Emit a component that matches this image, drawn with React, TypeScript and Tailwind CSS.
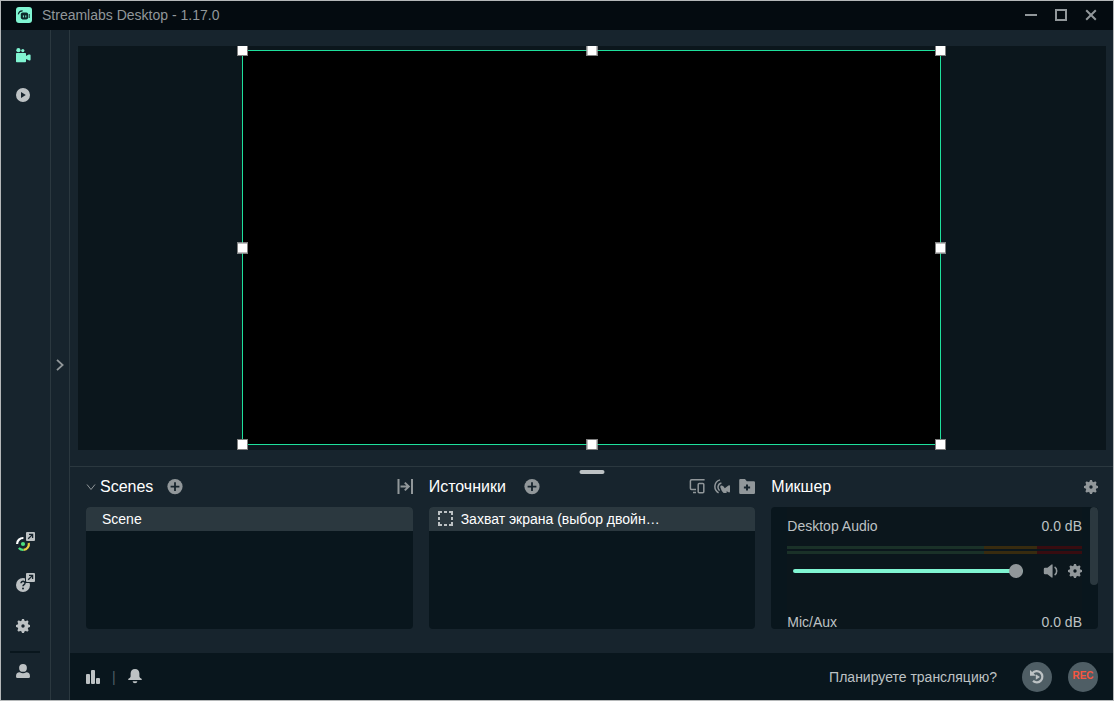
import React, { useState } from 'react';

function LogoIcon() {
  return (
    <svg width="16" height="16" viewBox="0 0 16 16" aria-hidden="true">
      <rect width="16" height="16" rx="3" fill="#80f5d2" />
      <path d="M2.4 7C2.8 5 4 4 6.2 3.8" stroke="#0d2a2b" strokeWidth="1.2" fill="none" strokeLinecap="round" />
      <rect x="4.8" y="5.6" width="7.4" height="6.8" rx="1.8" fill="#0d2a2b" />
      <path d="M7.4 8.4v2M9.8 8.4v2" stroke="#80f5d2" strokeWidth="1" />
      <path d="M13.3 7v4" stroke="#0d2a2b" strokeWidth=".9" />
    </svg>
  );
}

function CameraIcon() {
  return (
    <svg width="15" height="15" viewBox="0 0 15 15" fill="currentColor" aria-hidden="true">
      <circle cx="2.4" cy="2.2" r="2.1" />
      <circle cx="6.8" cy="2.6" r="1.6" />
      <path d="M0 5.6Q0 4.9.8 4.9H9.2Q10 4.9 10 5.6V8L12.6 6.6Q14.6 6 14.6 7.3V11.6Q14.6 12.9 12.6 12.3L10 11V13.4Q10 14.2 9.2 14.2H.8Q0 14.2 0 13.4Z" />
    </svg>
  );
}

function PlayIcon() {
  return (
    <svg width="14" height="14" viewBox="0 0 14 14" aria-hidden="true">
      <path fillRule="evenodd" d="M7 0a7 7 0 1 1 0 14A7 7 0 0 1 7 0ZM5 4v6l4.8-3Z" fill="currentColor" />
    </svg>
  );
}

function GearIcon() {
  return (
    <svg width="14" height="14" viewBox="0 0 14 14" fill="currentColor" aria-hidden="true">
      <circle cx="7" cy="7" r="3.6" fill="none" stroke="currentColor" strokeWidth="3.8" />
      {[0, 45, 90, 135, 180, 225, 270, 315].map((angle) => (
        <path key={angle} d="M5.3 2.6L6 0H8L8.7 2.6Z" transform={`rotate(${angle} 7 7)`} />
      ))}
    </svg>
  );
}

function ExternalBadge() {
  return (
    <>
      <rect x="9" y="-1" width="11" height="11" fill="#17242d" />
      <rect x="10" y="0" width="9" height="9" rx="1" fill="#bdc2c4" />
      <path d="M12.2 6.8L16.4 2.6M13 2.4H16.6V6" stroke="#17242d" strokeWidth="1.3" fill="none" />
    </>
  );
}

function DashboardIcon() {
  return (
    <svg width="19" height="19" viewBox="0 0 19 19" fill="none" aria-hidden="true">
      <path d="M1.1 12A6 6 0 0 1 7.4 6" stroke="#ffffff" strokeWidth="2.2" />
      <path d="M2.8 16A5.8 5.8 0 0 0 7.6 17.8" stroke="#4be07f" strokeWidth="2.2" />
      <path d="M7.6 17.8A5.8 5.8 0 0 0 12.8 11" stroke="#e8cf45" strokeWidth="2.2" />
      <circle cx="7" cy="12" r="2.1" fill="#4be07f" />
      <ExternalBadge />
    </svg>
  );
}

function HelpIcon() {
  return (
    <svg width="19" height="19" viewBox="0 0 19 19" fill="none" aria-hidden="true">
      <circle cx="7" cy="12" r="7" fill="#bdc2c4" />
      <path d="M5 10.3C5 7.6 9.2 7.8 9 10.2C8.9 11.6 7 11.6 7 13.3" stroke="#17242d" strokeWidth="1.5" />
      <circle cx="7" cy="15.4" r="1" fill="#17242d" />
      <ExternalBadge />
    </svg>
  );
}

function UserIcon() {
  return (
    <svg width="14" height="14" viewBox="0 0 14 14" fill="currentColor" aria-hidden="true">
      <circle cx="7" cy="3.9" r="3.9" />
      <path d="M0 12.4C0 9.6 1.2 8.2 3.7 8.2C5.6 9.6 8.4 9.6 10.3 8.2C12.8 8.2 14 9.6 14 12.4Q14 14 12.6 14H1.4Q0 14 0 12.4Z" />
    </svg>
  );
}

function AddIcon() {
  return (
    <svg width="16" height="16" viewBox="0 0 16 16" aria-hidden="true">
      <circle cx="8" cy="7.6" r="7.6" fill="currentColor" />
      <path d="M8 3.2v8.8M3.6 7.6h8.8" stroke="#17242d" strokeWidth="1.8" />
    </svg>
  );
}

function TransitionIcon() {
  return (
    <svg width="16" height="16" viewBox="0 0 16 16" fill="none" stroke="currentColor" strokeWidth="2" aria-hidden="true">
      <path d="M1.5 0v15M15 0v15M3.5 7.5h8.5M7.8 3.6L11.8 7.5L7.8 11.4" />
    </svg>
  );
}

function DevicesIcon() {
  return (
    <svg width="16" height="16" viewBox="0 0 16 16" fill="none" stroke="currentColor" strokeWidth="1.5" aria-hidden="true">
      <path d="M7 10.4H2.6Q1.4 10.4 1.4 9.2V2Q1.4.8 2.6.8H15.6M4 13.6H7" />
      <rect x="9.2" y="4.4" width="5.6" height="9.4" rx="1" />
    </svg>
  );
}

function GuestCamIcon() {
  return (
    <svg width="16" height="16" viewBox="0 0 16 16" fill="none" aria-hidden="true">
      <path d="M6 .9C-.4 3-.7 10.8 4.6 13.8M7.4 4C3.6 4.8 3 9.4 5.6 11.6" stroke="currentColor" strokeWidth="1.5" />
      <path d="M6.2 8Q6.4 6.2 8 6.6Q9.8 7.4 10.8 9.2L14.4 6.6Q16 5.6 16 7.2V12.6Q16 13.8 14.6 13.2L12.6 12.2V14H9.6Q7.4 12.2 6.2 8Z" fill="currentColor" />
    </svg>
  );
}

function FolderAddIcon() {
  return (
    <svg width="16" height="16" viewBox="0 0 16 16" aria-hidden="true">
      <path d="M1.4 0H6L7.8 2.2H14.8Q16 2.2 16 3.4V13.8Q16 15 14.8 15H1.4Q.2 15 .2 13.8V1.2Q.2 0 1.4 0Z" fill="currentColor" />
      <path d="M8 5.4v6.2M4.9 8.5h6.2" stroke="#17242d" strokeWidth="2" />
    </svg>
  );
}

function CaptureIcon() {
  return (
    <svg width="16" height="16" viewBox="0 0 16 16" fill="none" stroke="#bdc2c4" strokeWidth="2" aria-hidden="true">
      <path d="M1 4V1H4M6 1H9M11 1H14V4M14 6V9M14 11V14H11M9 14H6M4 14H1V11M1 9V6" />
    </svg>
  );
}

function SpeakerIcon() {
  return (
    <svg width="15" height="14" viewBox="0 0 15 14" aria-hidden="true">
      <path d="M2 3.8H4.4L8.6 .4Q9.6 0 9.6 1V13Q9.6 14 8.6 13.6L4.4 10.2H2Q.8 10.2.8 9V5Q.8 3.8 2 3.8Z" fill="currentColor" />
      <path d="M11.6 3C14.4 4.6 14.4 9.4 11.6 11" stroke="currentColor" strokeWidth="1.6" fill="none" />
    </svg>
  );
}

function StatsIcon() {
  return (
    <svg width="15" height="14" viewBox="0 0 15 14" fill="currentColor" aria-hidden="true">
      <rect x="0" y="4" width="4" height="10" rx="1" />
      <rect x="5" y="0" width="4" height="14" rx="1" />
      <rect x="10" y="8" width="4" height="6" rx="1" />
    </svg>
  );
}

function BellIcon() {
  return (
    <svg width="14" height="16" viewBox="0 0 14 16" fill="currentColor" aria-hidden="true">
      <path d="M7 0C9.8 0 11.4 2 11.4 4.4V7.2C11.4 8.4 12.4 9 13.6 9.8Q14.2 11 13 11H1Q-.2 11 .4 9.8C1.6 9 2.6 8.4 2.6 7.2V4.4C2.6 2 4.2 0 7 0ZM4.6 12.2H9.4Q9.2 14.2 7 14.2T4.6 12.2Z" />
    </svg>
  );
}

function ReplayIcon() {
  return (
    <svg width="16" height="16" viewBox="0 0 16 16" fill="none" aria-hidden="true">
      <path d="M3.4 4.2A5.6 5.6 0 1 1 4 11.9" stroke="#bdc2c4" strokeWidth="2.2" />
      <path d="M1 1V6.8H7Z" fill="#bdc2c4" />
      <path d="M6.8 5.2V10.8L11 8Z" fill="#bdc2c4" />
    </svg>
  );
}

const handlePositions = [
  '-left-[6px] -top-[6px]',
  'left-1/2 -translate-x-1/2 -top-[6px]',
  '-right-[6px] -top-[6px]',
  '-left-[6px] top-1/2 -translate-y-1/2',
  '-right-[6px] top-1/2 -translate-y-1/2',
  '-left-[6px] -bottom-[6px]',
  'left-1/2 -translate-x-1/2 -bottom-[6px]',
  '-right-[6px] -bottom-[6px]',
];

function TitleBar() {
  return (
    <header className="flex h-[29px] shrink-0 items-center bg-[#040b10] pb-px pl-[15px] pr-4 text-[#91979a]">
      <LogoIcon />
      <h1 className="ml-[10px] text-sm">Streamlabs Desktop - 1.17.0</h1>
      <div className="ml-auto flex gap-[18px] pb-px">
        <button type="button" aria-label="Minimize">
          <svg width="12" height="12" viewBox="0 0 12 12" aria-hidden="true">
            <path d="M0 6h12" stroke="currentColor" strokeWidth="2" />
          </svg>
        </button>
        <button type="button" aria-label="Maximize">
          <svg width="12" height="12" viewBox="0 0 12 12" aria-hidden="true">
            <rect x="1" y="1" width="10" height="10" fill="none" stroke="currentColor" strokeWidth="2" />
          </svg>
        </button>
        <button type="button" aria-label="Close">
          <svg width="12" height="12" viewBox="0 0 12 12" aria-hidden="true">
            <path d="M1.2 1.2L10.8 10.8M10.8 1.2L1.2 10.8" stroke="currentColor" strokeWidth="2" />
          </svg>
        </button>
      </div>
    </header>
  );
}

function SideNav() {
  return (
    <nav className="flex w-[50px] shrink-0 flex-col items-start border-r border-[#2b383f] pb-[22px] pl-[15px] pt-[18px] text-[#bdc2c4]">
      <button type="button" aria-label="Editor" className="text-[#80f5d2]"><CameraIcon /></button>
      <button type="button" aria-label="Highlighter" className="mt-[25px]"><PlayIcon /></button>
      <button type="button" aria-label="Dashboard" className="mt-auto"><DashboardIcon /></button>
      <button type="button" aria-label="Help" className="mt-[22px]"><HelpIcon /></button>
      <button type="button" aria-label="Settings" className="mt-[27px]"><GearIcon /></button>
      <div className="-ml-[6px] mb-[11px] mt-[18px] h-[2px] w-[30px] bg-[#09161d]" />
      <button type="button" aria-label="Login"><UserIcon /></button>
    </nav>
  );
}

function Preview() {
  return (
    <div className="min-h-0 flex-1 py-4 pl-2 pr-[7px]">
      <div className="flex h-full justify-center overflow-hidden bg-[#0b161c] pb-[5px] pr-px pt-1">
        <div className="relative aspect-[699/395] h-full border border-[#1ee09c] bg-black">
          {handlePositions.map((position) => (
            <span key={position} className={`absolute size-[11px] border border-[#7f7f7f] bg-white ${position}`} />
          ))}
        </div>
      </div>
    </div>
  );
}

function MeterBar() {
  return (
    <div className="flex h-[3px]">
      <div className="w-2/3 bg-[#1a3128]" />
      <div className="w-[18%] bg-[#382b0f]" />
      <div className="flex-1 bg-[#380c10]" />
    </div>
  );
}

function MixerItem({ name }: { name: string }) {
  const [volume, setVolume] = useState(100);

  return (
    <div className="h-24 shrink-0 bg-[#0b161c] pt-[9px]">
      <div className="flex h-5 items-center justify-between text-sm text-[#bdc2c4]">
        <span>{name}</span>
        <span>0.0 dB</span>
      </div>
      <div className="mt-[10px] flex flex-col gap-[2px]">
        <MeterBar />
        <MeterBar />
      </div>
      <div className="mt-[10px] flex h-[14px] items-center pl-[6px] text-[#91979a]">
        <input
          type="range"
          aria-label={name}
          value={volume}
          onChange={(e) => setVolume(Number(e.target.value))}
          className="h-1 min-w-0 flex-1 appearance-none rounded-full bg-[#80f5d2] [&::-webkit-slider-thumb]:size-[14px] [&::-webkit-slider-thumb]:appearance-none [&::-webkit-slider-thumb]:rounded-full [&::-webkit-slider-thumb]:bg-[#91979a]"
        />
        <button type="button" aria-label="Mute" className="ml-5"><SpeakerIcon /></button>
        <button type="button" aria-label="Audio settings" className="ml-[10px]"><GearIcon /></button>
      </div>
    </div>
  );
}

function ScenesPanel() {
  return (
    <section className="min-w-0">
      <div className="mb-2 flex h-6 items-center text-[#91979a]">
        <button type="button" className="flex items-center gap-1 text-base text-white">
          <svg width="10" height="8" viewBox="0 0 10 8" fill="none" aria-hidden="true">
            <path d="M1 1.5L5 6.5L9 1.5" stroke="#91979a" strokeWidth="1" />
          </svg>
          Scenes
        </button>
        <button type="button" aria-label="Add scene" className="ml-[14px]"><AddIcon /></button>
        <button type="button" aria-label="Transitions" className="ml-auto"><TransitionIcon /></button>
      </div>
      <ul className="h-[122px] overflow-hidden rounded bg-[#09161d]">
        <li className="flex h-6 items-center bg-[#2b383f] px-4 text-sm text-white">Scene</li>
      </ul>
    </section>
  );
}

function SourcesPanel() {
  return (
    <section className="min-w-0">
      <div className="mb-2 flex h-6 items-center text-[#91979a]">
        <h2 className="text-base text-white">Источники</h2>
        <button type="button" aria-label="Add source" className="ml-[18px]"><AddIcon /></button>
        <div className="ml-auto flex gap-[9px]">
          <button type="button" aria-label="Dual output"><DevicesIcon /></button>
          <button type="button" aria-label="Guest cam"><GuestCamIcon /></button>
          <button type="button" aria-label="Add group"><FolderAddIcon /></button>
        </div>
      </div>
      <ul className="h-[122px] overflow-hidden rounded bg-[#09161d]">
        <li className="flex h-6 items-center gap-[7px] bg-[#2b383f] px-[9px] text-sm text-white">
          <CaptureIcon />
          Захват экрана (выбор двойн…
        </li>
      </ul>
    </section>
  );
}

function MixerPanel() {
  return (
    <section className="min-w-0">
      <div className="mb-2 flex h-6 items-center justify-between text-[#91979a]">
        <h2 className="text-base text-white">Микшер</h2>
        <button type="button" aria-label="Mixer settings"><GearIcon /></button>
      </div>
      <div className="flex h-[122px] overflow-hidden rounded bg-[#09161d]">
        <div className="flex flex-1 flex-col pl-4 pr-2">
          <MixerItem name="Desktop Audio" />
          <MixerItem name="Mic/Aux" />
        </div>
        <div className="h-[78px] w-2 rounded-full bg-[#2b383f]" />
      </div>
    </section>
  );
}

function Footer() {
  return (
    <footer className="flex h-[47px] shrink-0 items-center bg-[#09161d] pl-4 pr-[15px] text-sm text-[#bdc2c4]">
      <button type="button" aria-label="Performance"><StatsIcon /></button>
      <span className="ml-[11px] text-[#4f5e65]">|</span>
      <button type="button" aria-label="Notifications" className="ml-3"><BellIcon /></button>
      <button type="button" className="ml-auto">Планируете трансляцию?</button>
      <button type="button" aria-label="Replay buffer" className="ml-[25px] flex size-[30px] items-center justify-center rounded-full bg-[#4f5e65]">
        <ReplayIcon />
      </button>
      <button type="button" className="ml-4 flex size-[30px] items-center justify-center rounded-full bg-[#4f5e65] text-[10px] font-bold text-[#f85640]">
        REC
      </button>
    </footer>
  );
}

export default function App() {
  return (
    <div className="flex h-screen flex-col border border-[#b5b8b9] bg-[#17242d] font-['Liberation_Sans',Arial,sans-serif] [&_button]:shrink-0 [&_svg]:block">
      <TitleBar />
      <div className="flex min-h-0 flex-1">
        <SideNav />
        <button type="button" aria-label="Expand" className="flex w-[19px] items-center justify-center border-r border-[#2b383f] text-[#91979a]">
          <svg width="8" height="12" viewBox="0 0 8 12" fill="none" aria-hidden="true">
            <path d="M1 .8L6.6 6L1 11.2" stroke="currentColor" strokeWidth="1.8" />
          </svg>
        </button>
        <main className="flex min-w-0 flex-1 flex-col">
          <Preview />
          <div className="relative grid shrink-0 grid-cols-3 gap-4 border-t border-[#2b383f] pb-6 pl-4 pr-[15px] pt-2">
            <div className="absolute left-1/2 top-[3px] h-1 w-[25px] -translate-x-1/2 rounded-full bg-[#bdc2c4]" />
            <ScenesPanel />
            <SourcesPanel />
            <MixerPanel />
          </div>
          <Footer />
        </main>
      </div>
    </div>
  );
}
